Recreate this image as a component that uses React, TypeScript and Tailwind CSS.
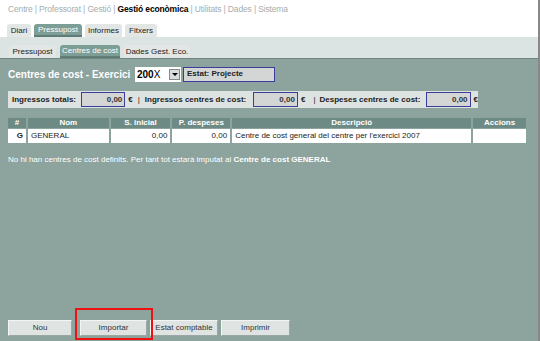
const font = "font-['Liberation_Sans',Arial,sans-serif]";

function Tab({ label, active, w }: { label: string; active?: boolean; w: string }) {
  return (
    <div
      className={`${w} h-[13px] rounded-t-[3px] flex items-center justify-center text-[8px] leading-none ${
        active ? "bg-[#7d9d97] text-white border-b-2 border-[#5f7c76]" : "bg-[#e2e6e4] text-[#222]"
      }`}
    >
      {label}
    </div>
  );
}

function Money({ w = "w-[45px]" }: { w?: string }) {
  return (
    <div className={`${w} h-[15px] bg-[#d4d6d6] border border-[#3c3c9a] flex items-center justify-end pr-[2px] text-[8px] text-[#333]`}>
      0,00
    </div>
  );
}

function Btn({ label, w }: { label: string; w: string }) {
  return (
    <div className={`${w} h-[16px] bg-[#dfe4e3] border border-[#f3f5f5] border-r-[#9aa8a5] border-b-[#9aa8a5] flex items-center justify-center text-[8px] text-[#333]`}>
      {label}
    </div>
  );
}

export default function App() {
  return (
    <div className={`${font} w-[540px] h-[341px] bg-white flex flex-col overflow-hidden border-r-2 border-[#888]`}>
      {/* top menu */}
      <div className="h-[20px] pl-[8px] pt-[3px] text-[8.5px] text-[#a5aeae] tracking-[-0.15px] whitespace-nowrap">
        Centre | Professorat | Gestió | <span className="font-bold text-black">Gestió econòmica</span> | Utilitats | Dades | Sistema
      </div>
      <div className="flex gap-[3px] pl-[7px] pt-[4px]">
        <Tab label="Diari" w="w-[24px]" />
        <Tab label="Pressupost" active w="w-[48px]" />
        <Tab label="Informes" w="w-[37px]" />
        <Tab label="Fitxers" w="w-[32px]" />
      </div>
      <div className="bg-[#dbe4e3] h-[21px] flex items-end gap-[4px] pl-[9px]">
        <Tab label="Pressupost" w="w-[47px]" />
        <Tab label="Centres de cost" active w="w-[60px]" />
        <Tab label="Dades Gest. Eco." w="w-[66px]" />
      </div>

      {/* main panel */}
      <div className="flex-1 bg-[#8ca39e] border-t border-[#6f8783] flex flex-col px-[8px]">
        <div className="flex items-center h-[16px] mt-[7px]">
          <span className="text-white font-bold text-[10px] w-[127px] whitespace-nowrap">
            Centres de cost - Exercici
          </span>
          <div className="w-[46px] h-[15px] bg-white flex items-center pl-[2px] text-[10px] text-black">
            <span className="font-bold">200</span>X
            <div className="ml-auto mr-[1px] w-[11px] h-[11px] bg-[#d9dcdc] border border-[#888] flex items-center justify-center">
              <div className="w-0 h-0 border-l-[3px] border-r-[3px] border-t-[3px] border-l-transparent border-r-transparent border-t-black" />
            </div>
          </div>
          <div className="ml-[2px] w-[92px] h-[15px] bg-[#d4d6d6] border border-[#3c3c9a] flex items-center pl-[3px] text-[8px] font-bold text-[#222]">
            Estat: Projecte
          </div>
        </div>

        <div className="mt-[9px] w-[470px] h-[17px] bg-[#dde3e1] flex items-center pl-[4px] text-[8px] font-bold text-[#222] whitespace-nowrap">
          <span className="w-[69px]">Ingressos totals:</span>
          <Money />
          <span className="ml-[3px]">€</span>
          <span className="ml-[5px] mr-[5px] font-normal">|</span>
          <span className="w-[109px]">Ingressos centres de cost:</span>
          <Money />
          <span className="ml-[3px]">€</span>
          <span className="ml-[8px] mr-[4px] font-normal">|</span>
          <span className="w-[107px]">Despeses centres de cost:</span>
          <Money />
          <span className="ml-[3px]">€</span>
        </div>

        {/* table */}
        <div className="mt-[10px] w-[518px] text-[8px]">
          <div className="flex gap-[2px] h-[10px] text-white font-bold">
            <div className="w-[18px] bg-[#6e8a85] flex items-center justify-center">#</div>
            <div className="w-[81px] bg-[#6e8a85] flex items-center justify-center">Nom</div>
            <div className="w-[60px] bg-[#6e8a85] flex items-center justify-center">S. inicial</div>
            <div className="w-[58px] bg-[#6e8a85] flex items-center justify-center">P. despeses</div>
            <div className="w-[240px] bg-[#6e8a85] flex items-center justify-center">Descripció</div>
            <div className="w-[53px] bg-[#6e8a85] flex items-center justify-center">Accions</div>
          </div>
          <div className="flex gap-[2px] h-[14px] mt-[1px] text-[#222]">
            <div className="w-[18px] bg-white flex items-center justify-end pr-[3px] font-bold">G</div>
            <div className="w-[81px] bg-white flex items-center pl-[3px]">GENERAL</div>
            <div className="w-[60px] bg-white flex items-center justify-end pr-[3px]">0,00</div>
            <div className="w-[58px] bg-white flex items-center justify-end pr-[3px]">0,00</div>
            <div className="w-[240px] bg-white flex items-center pl-[3px]">
              Centre de cost general del centre per l'exercici 2007
            </div>
            <div className="w-[53px] bg-white" />
          </div>
        </div>

        <div className="mt-[11px] text-[8px] text-white">
          No hi han centres de cost definits. Per tant tot estarà imputat al{" "}
          <span className="font-bold">Centre de cost GENERAL</span>
        </div>

        {/* buttons */}
        <div className="relative mt-auto mb-[5px] flex items-center gap-[3px]">
          <Btn label="Nou" w="w-[64px]" />
          <div className="ml-[5px]">
            <Btn label="Importar" w="w-[67px]" />
          </div>
          <Btn label="Estat comptable" w="w-[68px]" />
          <Btn label="Imprimir" w="w-[69px]" />
          {/* highlight annotation */}
          <div className="absolute left-[67px] top-[-12px] w-[78px] h-[32px] border-2 border-[#e11]" />
        </div>
      </div>
    </div>
  );
}
